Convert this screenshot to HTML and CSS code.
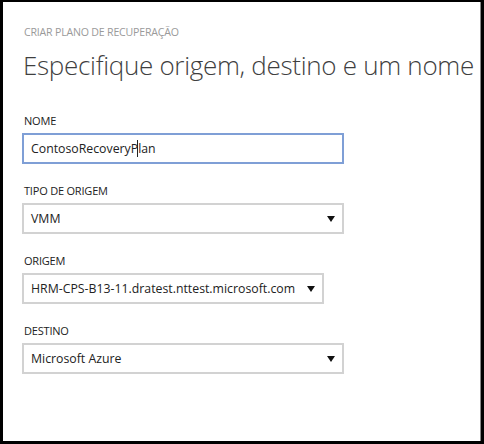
FILE: index.html
```html
<!DOCTYPE html>
<html lang="pt">
<head>
<meta charset="utf-8">
<link rel="stylesheet" href="styles.css">
</head>
<body>
<div class="dialog">
  <div class="eyebrow">CRIAR PLANO DE RECUPERAÇÃO</div>
  <h1 class="title">Especifique origem, destino e um nome</h1>
  <div class="form">
    <div class="field">
      <div class="label">NOME</div>
      <div class="box box-input">ContosoRecoveryP<span class="caret"></span>lan</div>
    </div>
    <div class="field">
      <div class="label">TIPO DE ORIGEM</div>
      <div class="box box-select"><span>VMM</span><span class="arrow"></span></div>
    </div>
    <div class="field">
      <div class="label">ORIGEM</div>
      <div class="box box-select narrow"><span>HRM-CPS-B13-11.dratest.nttest.microsoft.com</span><span class="arrow"></span></div>
    </div>
    <div class="field">
      <div class="label">DESTINO</div>
      <div class="box box-select"><span>Microsoft Azure</span><span class="arrow"></span></div>
    </div>
  </div>
</div>
</body>
</html>
```
FILE: styles.css
```css
* { box-sizing: border-box; }
html, body { margin: 0; padding: 0; background: #000; }
body { width: 484px; height: 444px; font-family: "Open Sans", "Noto Sans", sans-serif; }
.dialog {
  width: 484px;
  height: 444px;
  background: #fff;
  border-top: 2px solid #000;
  border-left: 3px solid #000;
  border-right: 3px solid #000;
  border-bottom: 3px solid #000;
  box-shadow: inset -1px 0 0 #888;
  padding: 22px 0 0 21px;
}
.eyebrow {
  font-size: 10.6px;
  color: #9a9a9a;
  line-height: 16px;
  letter-spacing: -0.2px;
}
.title {
  margin: 8px 0 0 -1px;
  font-size: 26px;
  font-weight: 300;
  color: #3f3f3f;
  line-height: 34px;
  letter-spacing: -0.3px;
  white-space: nowrap;
}
.form { margin-top: 31px; display: flex; flex-direction: column; gap: 19px; }
.field { display: flex; flex-direction: column; }
.label {
  font-size: 11px;
  line-height: 16px;
  color: #222;
  margin-bottom: 4px;
  letter-spacing: -0.2px;
}
.box {
  width: 322px;
  height: 31px;
  margin-left: -2px;
  border: 2px solid #d2d2d2;
  font-size: 12.3px;
  color: #222;
  display: flex;
  align-items: center;
  padding: 0 7px 0 7px;
  white-space: nowrap;
}
.box-input { border-color: #7f9fd6; }
.narrow { width: 302px; }
.box-select { justify-content: space-between; }
.caret {
  display: inline-block;
  width: 1px;
  height: 17px;
  background: #222;
  margin: 0 0 0 -1px;
}
.arrow {
  width: 0; height: 0;
  border-left: 4px solid transparent;
  border-right: 4px solid transparent;
  border-top: 6px solid #111;
}
```
